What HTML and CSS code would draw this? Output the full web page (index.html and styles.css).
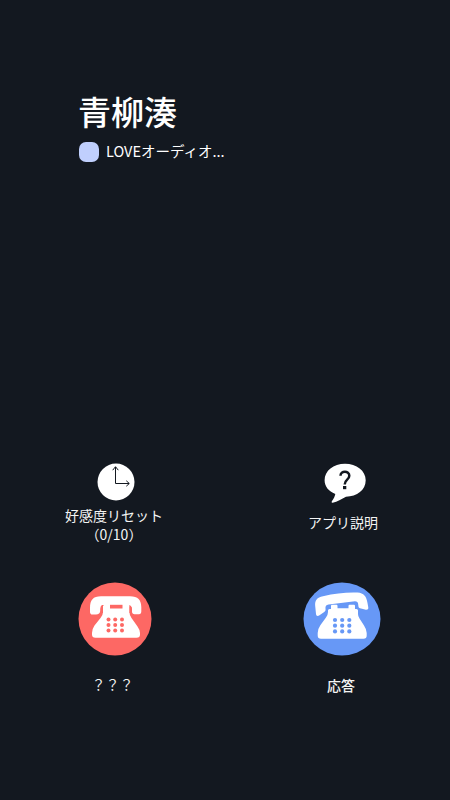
FILE: index.html
```
<!DOCTYPE html>
<html lang="ja">
	<head>
		<meta charset="utf-8" />
		<meta name="viewport" content="width=device-width, initial-scale=1">
		<title>青柳湊</title>
		<link rel="stylesheet" href="styles.css">
	</head>
	<body>
		<div class="screen">
			<div class="caller">
				<h1>青柳湊</h1>
				<div class="app">
					<span class="app-icon"></span>
					<span class="app-name">LOVEオーディオ...</span>
				</div>
			</div>
			<div class="menu">
				<a class="item reset" href="#">
					<svg width="38" height="38" viewBox="0 0 38 38">
						<circle cx="19" cy="19" r="18.5" fill="#fff"/>
						<path d="M18.5 20.5V4M15.7 7.2L18.5 3.7L21.3 7.2M18.5 20.5H32M29.3 17.8L32.3 20.5L29.3 23.2" fill="none" stroke="#131820" stroke-width="1"/>
					</svg>
					<p>好感度リセット<br>（0/10）</p>
				</a>
				<a class="item help" href="#">
					<svg width="42" height="40" viewBox="0 0 42 40">
						<path d="M21 .7C32.5 .7 41.7 7.6 41.7 17.3C41.7 27 33 33.7 22 33.7C17.5 35.7 13.5 38.8 8.7 39.7C7.5 39.9 7.3 39 8 38C9.7 35.7 11 33 11.3 31C4.5 28.2 .6 23.5 .6 17.3C.6 7.6 9.500 .7 21 .7Z" fill="#fff"/>
						<path d="M16.5 12.800C16.500 7.400 25.300 7.400 25.300 12.700C25.300 16.900 20.700 16.400 20.700 21.500" fill="none" stroke="#131820" stroke-width="2.500"/>
						<rect x="19" y="23" width="3.300" height="3.200" fill="#131820"/>
					</svg>
					<p>アプリ説明</p>
				</a>
				<a class="item refuse" href="#">
					<svg width="74" height="74" viewBox="0 0 74 74">
						<circle cx="37" cy="37" r="36.500" fill="#fd6864"/>
						<path d="M23 14.200H52C60 14.200 63.300 18 63.300 25V29.500C63.300 31 62.500 32.200 61 32.200H56.500C55 32.200 54 31.300 54 29.800V27.500Q54 23.500 51 23H24Q22.500 23.500 22.300 27V28.500C22.300 31 20.500 32.600 18 32.600H14.500C12.800 32.600 12 31.500 12 30V26C12 18 15 14.200 23 14.200Z" fill="#fff"/>
						<path d="M27 22H50Q51.500 22 51.500 25V30.500Q51.500 33.500 53.500 36L59.500 44.500Q62 48 62 51V52.500Q62 55.700 58.500 55.700H17.500Q14 55.700 14 52.500V51Q14 47 16.500 43.500L22.500 36Q25 33 25 30V24Z" fill="#fff"/>
						<g fill="#fd6864">
							<rect x="32" y="22.800" width="12.500" height="3.700"/>
							<circle cx="30.500" cy="37.500" r="2"/><circle cx="37.200" cy="37.500" r="2"/><circle cx="44" cy="37.500" r="2"/>
							<circle cx="30.500" cy="43" r="2"/><circle cx="37.200" cy="43" r="2"/><circle cx="44" cy="43" r="2"/>
							<circle cx="30.500" cy="48.500" r="2"/><circle cx="37.200" cy="48.500" r="2"/><circle cx="44" cy="48.500" r="2"/>
							<path d="M22.800 25.500L25 24.300V31L22.500 31Z"/>
							<path d="M51.500 24.300L53.700 25.500V31L51.500 31Z"/>
						</g>
					</svg>
					<p>？？？</p>
				</a>
				<a class="item answer" href="#">
					<svg width="78" height="74" viewBox="0 0 78 74">
						<ellipse cx="39" cy="37" rx="38.500" ry="36.500" fill="#6798f6"/>
						<path d="M20 14.200Q38 10 54.500 10.600C61 11 63.300 14.500 64.500 21L65.300 25.500C65.600 27.500 64 28 62 27.500L57 26.200C55.300 25.700 55.500 24.500 55.200 22.500Q55 19.300 52 19.300L25.500 22.500Q22 23 22.500 26.500C22.900 28.700 22 29.500 20.500 30.500L16.500 33.200C14.700 34.400 13.200 34 13 32L12.200 24C11.700 18 14 15.500 20 14.200Z" fill="#fff"/>
						<path d="M29 22.800H33.500Q34.500 22.800 34.500 24V26.300H45.500V24Q45.500 22.800 46.500 22.800H51Q52 22.800 52 24V27H53.500Q55 27 55 28.500V32Q55 34.500 56.500 36.500L61 43.500Q63.700 47.500 63.700 51V53.500Q63.700 56.700 60.500 56.700H18Q14.700 56.700 14.700 53.500V51Q14.700 47 17.500 43L23 35.500Q25 32.500 25 30V28.500Q25 27 26.500 27H28V24Q28 22.800 29 22.800Z" fill="#fff"/>
						<g fill="#6798f6">
							<circle cx="32" cy="38" r="2.100"/><circle cx="39.200" cy="38" r="2.100"/><circle cx="46.300" cy="38" r="2.100"/>
							<circle cx="32" cy="43.700" r="2.100"/><circle cx="39.200" cy="43.700" r="2.100"/><circle cx="46.300" cy="43.700" r="2.100"/>
							<circle cx="32" cy="49.400" r="2.100"/><circle cx="39.200" cy="49.400" r="2.100"/><circle cx="46.300" cy="49.400" r="2.100"/>
						</g>
					</svg>
					<p>応答</p>
				</a>
			</div>
		</div>
	</body>
</html>
```

FILE: styles.css
```
body,h1,p{
	margin: 0;
	padding: 0;
}
body{
	background: #131820;
	color: #fff;
	font-family: "Noto Sans CJK JP", sans-serif;
}
a{
	text-decoration: none;
	color: #f4f4f4;
}
svg{
	display: block;
}
.screen{
	box-sizing: border-box;
	width: 450px;
	height: 800px;
	padding-top: 89px;
	overflow: hidden;
}
.caller{
	height: 373px;
	padding-left: 78px;
}
h1{
	font-size: 33px;
	font-weight: 500;
	line-height: 44px;
}
.app{
	display: flex;
	align-items: center;
	gap: 7px;
	height: 20px;
	margin-top: 9px;
	padding-left: 1px;
}
.app-icon{
	width: 20px;
	height: 20px;
	border-radius: 7px;
	background: #c0cffd;
}
.app-name{
	font-size: 14.5px;
	line-height: 20px;
	padding-bottom: 3px;
}
.menu{
	display: grid;
	grid-template-columns: 160px 160px;
	grid-template-rows: 120px 120px;
	column-gap: 67px;
	padding-left: 35px;
}
.item{
	display: flex;
	flex-direction: column;
	align-items: center;
	font-size: 14px;
	line-height: 19px;
	text-align: center;
}
.reset p{
	margin-top: 5px;
	padding-right: 2px;
}
.reset svg{
	margin: 1px 0 0 1px;
}
.help svg{
	margin: 1px 0 0 6px;
}
.help p{
	margin-top: 10px;
	padding-left: 2px;
}
.refuse p{
	margin-top: 19px;
	padding-right: 5px;
}
.answer p{
	margin-top: 20px;
	padding-right: 2px;
	font-weight: 500;
}
```
